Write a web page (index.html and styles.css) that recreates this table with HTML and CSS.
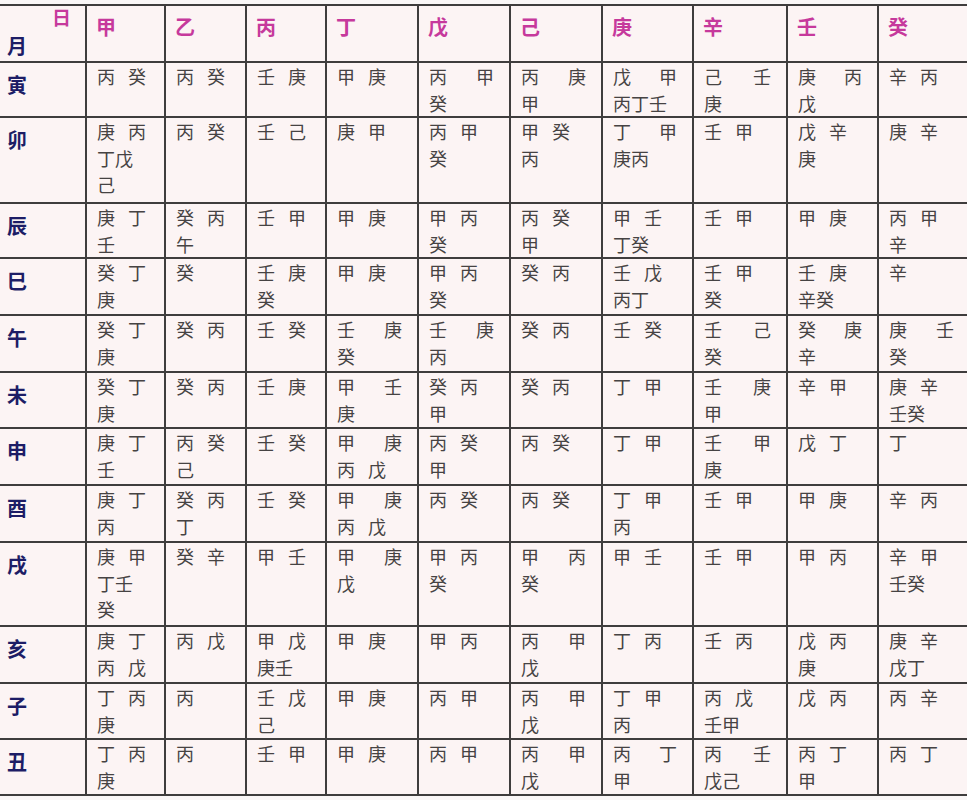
FILE: index.html
```html
<!DOCTYPE html>
<html lang="zh-CN">
<head>
<meta charset="utf-8">
<title>月日干支表</title>
<link rel="stylesheet" href="styles.css">
</head>
<body>
<div class="grid">
  <div class="corner"><span class="ri">日</span><span class="yue">月</span></div>
  <div class="h">甲</div><div class="h">乙</div><div class="h">丙</div><div class="h">丁</div><div class="h">戊</div><div class="h">己</div><div class="h">庚</div><div class="h">辛</div><div class="h">壬</div><div class="h">癸</div>

  <div class="r">寅</div>
  <div class="d"><div class="ln"><span>丙</span><span>癸</span></div></div>
  <div class="d"><div class="ln"><span>丙</span><span>癸</span></div></div>
  <div class="d"><div class="ln"><span>壬</span><span>庚</span></div></div>
  <div class="d"><div class="ln"><span>甲</span><span>庚</span></div></div>
  <div class="d"><div class="ln j"><span>丙</span><span>甲</span></div><div class="ln"><span>癸</span></div></div>
  <div class="d"><div class="ln j"><span>丙</span><span>庚</span></div><div class="ln"><span>甲</span></div></div>
  <div class="d"><div class="ln j"><span>戊</span><span>甲</span></div><div class="ln"><span>丙丁壬</span></div></div>
  <div class="d"><div class="ln j"><span>己</span><span>壬</span></div><div class="ln"><span>庚</span></div></div>
  <div class="d"><div class="ln j"><span>庚</span><span>丙</span></div><div class="ln"><span>戊</span></div></div>
  <div class="d"><div class="ln"><span>辛</span><span>丙</span></div></div>

  <div class="r">卯</div>
  <div class="d"><div class="ln"><span>庚</span><span>丙</span></div><div class="ln"><span>丁戊</span></div><div class="ln"><span>己</span></div></div>
  <div class="d"><div class="ln"><span>丙</span><span>癸</span></div></div>
  <div class="d"><div class="ln"><span>壬</span><span>己</span></div></div>
  <div class="d"><div class="ln"><span>庚</span><span>甲</span></div></div>
  <div class="d"><div class="ln"><span>丙</span><span>甲</span></div><div class="ln"><span>癸</span></div></div>
  <div class="d"><div class="ln"><span>甲</span><span>癸</span></div><div class="ln"><span>丙</span></div></div>
  <div class="d"><div class="ln j"><span>丁</span><span>甲</span></div><div class="ln"><span>庚丙</span></div></div>
  <div class="d"><div class="ln"><span>壬</span><span>甲</span></div></div>
  <div class="d"><div class="ln"><span>戊</span><span>辛</span></div><div class="ln"><span>庚</span></div></div>
  <div class="d"><div class="ln"><span>庚</span><span>辛</span></div></div>

  <div class="r">辰</div>
  <div class="d"><div class="ln"><span>庚</span><span>丁</span></div><div class="ln"><span>壬</span></div></div>
  <div class="d"><div class="ln"><span>癸</span><span>丙</span></div><div class="ln"><span>午</span></div></div>
  <div class="d"><div class="ln"><span>壬</span><span>甲</span></div></div>
  <div class="d"><div class="ln"><span>甲</span><span>庚</span></div></div>
  <div class="d"><div class="ln"><span>甲</span><span>丙</span></div><div class="ln"><span>癸</span></div></div>
  <div class="d"><div class="ln"><span>丙</span><span>癸</span></div><div class="ln"><span>甲</span></div></div>
  <div class="d"><div class="ln"><span>甲</span><span>壬</span></div><div class="ln"><span>丁癸</span></div></div>
  <div class="d"><div class="ln"><span>壬</span><span>甲</span></div></div>
  <div class="d"><div class="ln"><span>甲</span><span>庚</span></div></div>
  <div class="d"><div class="ln"><span>丙</span><span>甲</span></div><div class="ln"><span>辛</span></div></div>

  <div class="r">巳</div>
  <div class="d"><div class="ln"><span>癸</span><span>丁</span></div><div class="ln"><span>庚</span></div></div>
  <div class="d"><div class="ln"><span>癸</span></div></div>
  <div class="d"><div class="ln"><span>壬</span><span>庚</span></div><div class="ln"><span>癸</span></div></div>
  <div class="d"><div class="ln"><span>甲</span><span>庚</span></div></div>
  <div class="d"><div class="ln"><span>甲</span><span>丙</span></div><div class="ln"><span>癸</span></div></div>
  <div class="d"><div class="ln"><span>癸</span><span>丙</span></div></div>
  <div class="d"><div class="ln"><span>壬</span><span>戊</span></div><div class="ln"><span>丙丁</span></div></div>
  <div class="d"><div class="ln"><span>壬</span><span>甲</span></div><div class="ln"><span>癸</span></div></div>
  <div class="d"><div class="ln"><span>壬</span><span>庚</span></div><div class="ln"><span>辛癸</span></div></div>
  <div class="d"><div class="ln"><span>辛</span></div></div>

  <div class="r">午</div>
  <div class="d"><div class="ln"><span>癸</span><span>丁</span></div><div class="ln"><span>庚</span></div></div>
  <div class="d"><div class="ln"><span>癸</span><span>丙</span></div></div>
  <div class="d"><div class="ln"><span>壬</span><span>癸</span></div></div>
  <div class="d"><div class="ln j"><span>壬</span><span>庚</span></div><div class="ln"><span>癸</span></div></div>
  <div class="d"><div class="ln j"><span>壬</span><span>庚</span></div><div class="ln"><span>丙</span></div></div>
  <div class="d"><div class="ln"><span>癸</span><span>丙</span></div></div>
  <div class="d"><div class="ln"><span>壬</span><span>癸</span></div></div>
  <div class="d"><div class="ln j"><span>壬</span><span>己</span></div><div class="ln"><span>癸</span></div></div>
  <div class="d"><div class="ln j"><span>癸</span><span>庚</span></div><div class="ln"><span>辛</span></div></div>
  <div class="d"><div class="ln j"><span>庚</span><span>壬</span></div><div class="ln"><span>癸</span></div></div>

  <div class="r">未</div>
  <div class="d"><div class="ln"><span>癸</span><span>丁</span></div><div class="ln"><span>庚</span></div></div>
  <div class="d"><div class="ln"><span>癸</span><span>丙</span></div></div>
  <div class="d"><div class="ln"><span>壬</span><span>庚</span></div></div>
  <div class="d"><div class="ln j"><span>甲</span><span>壬</span></div><div class="ln"><span>庚</span></div></div>
  <div class="d"><div class="ln"><span>癸</span><span>丙</span></div><div class="ln"><span>甲</span></div></div>
  <div class="d"><div class="ln"><span>癸</span><span>丙</span></div></div>
  <div class="d"><div class="ln"><span>丁</span><span>甲</span></div></div>
  <div class="d"><div class="ln j"><span>壬</span><span>庚</span></div><div class="ln"><span>甲</span></div></div>
  <div class="d"><div class="ln"><span>辛</span><span>甲</span></div></div>
  <div class="d"><div class="ln"><span>庚</span><span>辛</span></div><div class="ln"><span>壬癸</span></div></div>

  <div class="r">申</div>
  <div class="d"><div class="ln"><span>庚</span><span>丁</span></div><div class="ln"><span>壬</span></div></div>
  <div class="d"><div class="ln"><span>丙</span><span>癸</span></div><div class="ln"><span>己</span></div></div>
  <div class="d"><div class="ln"><span>壬</span><span>癸</span></div></div>
  <div class="d"><div class="ln j"><span>甲</span><span>庚</span></div><div class="ln"><span>丙</span><span>戊</span></div></div>
  <div class="d"><div class="ln"><span>丙</span><span>癸</span></div><div class="ln"><span>甲</span></div></div>
  <div class="d"><div class="ln"><span>丙</span><span>癸</span></div></div>
  <div class="d"><div class="ln"><span>丁</span><span>甲</span></div></div>
  <div class="d"><div class="ln j"><span>壬</span><span>甲</span></div><div class="ln"><span>庚</span></div></div>
  <div class="d"><div class="ln"><span>戊</span><span>丁</span></div></div>
  <div class="d"><div class="ln"><span>丁</span></div></div>

  <div class="r">酉</div>
  <div class="d"><div class="ln"><span>庚</span><span>丁</span></div><div class="ln"><span>丙</span></div></div>
  <div class="d"><div class="ln"><span>癸</span><span>丙</span></div><div class="ln"><span>丁</span></div></div>
  <div class="d"><div class="ln"><span>壬</span><span>癸</span></div></div>
  <div class="d"><div class="ln j"><span>甲</span><span>庚</span></div><div class="ln"><span>丙</span><span>戊</span></div></div>
  <div class="d"><div class="ln"><span>丙</span><span>癸</span></div></div>
  <div class="d"><div class="ln"><span>丙</span><span>癸</span></div></div>
  <div class="d"><div class="ln"><span>丁</span><span>甲</span></div><div class="ln"><span>丙</span></div></div>
  <div class="d"><div class="ln"><span>壬</span><span>甲</span></div></div>
  <div class="d"><div class="ln"><span>甲</span><span>庚</span></div></div>
  <div class="d"><div class="ln"><span>辛</span><span>丙</span></div></div>

  <div class="r">戌</div>
  <div class="d"><div class="ln"><span>庚</span><span>甲</span></div><div class="ln"><span>丁壬</span></div><div class="ln"><span>癸</span></div></div>
  <div class="d"><div class="ln"><span>癸</span><span>辛</span></div></div>
  <div class="d"><div class="ln"><span>甲</span><span>壬</span></div></div>
  <div class="d"><div class="ln j"><span>甲</span><span>庚</span></div><div class="ln"><span>戊</span></div></div>
  <div class="d"><div class="ln"><span>甲</span><span>丙</span></div><div class="ln"><span>癸</span></div></div>
  <div class="d"><div class="ln j"><span>甲</span><span>丙</span></div><div class="ln"><span>癸</span></div></div>
  <div class="d"><div class="ln"><span>甲</span><span>壬</span></div></div>
  <div class="d"><div class="ln"><span>壬</span><span>甲</span></div></div>
  <div class="d"><div class="ln"><span>甲</span><span>丙</span></div></div>
  <div class="d"><div class="ln"><span>辛</span><span>甲</span></div><div class="ln"><span>壬癸</span></div></div>

  <div class="r">亥</div>
  <div class="d"><div class="ln"><span>庚</span><span>丁</span></div><div class="ln"><span>丙</span><span>戊</span></div></div>
  <div class="d"><div class="ln"><span>丙</span><span>戊</span></div></div>
  <div class="d"><div class="ln"><span>甲</span><span>戊</span></div><div class="ln"><span>庚壬</span></div></div>
  <div class="d"><div class="ln"><span>甲</span><span>庚</span></div></div>
  <div class="d"><div class="ln"><span>甲</span><span>丙</span></div></div>
  <div class="d"><div class="ln j"><span>丙</span><span>甲</span></div><div class="ln"><span>戊</span></div></div>
  <div class="d"><div class="ln"><span>丁</span><span>丙</span></div></div>
  <div class="d"><div class="ln"><span>壬</span><span>丙</span></div></div>
  <div class="d"><div class="ln"><span>戊</span><span>丙</span></div><div class="ln"><span>庚</span></div></div>
  <div class="d"><div class="ln"><span>庚</span><span>辛</span></div><div class="ln"><span>戊丁</span></div></div>

  <div class="r">子</div>
  <div class="d"><div class="ln"><span>丁</span><span>丙</span></div><div class="ln"><span>庚</span></div></div>
  <div class="d"><div class="ln"><span>丙</span></div></div>
  <div class="d"><div class="ln"><span>壬</span><span>戊</span></div><div class="ln"><span>己</span></div></div>
  <div class="d"><div class="ln"><span>甲</span><span>庚</span></div></div>
  <div class="d"><div class="ln"><span>丙</span><span>甲</span></div></div>
  <div class="d"><div class="ln j"><span>丙</span><span>甲</span></div><div class="ln"><span>戊</span></div></div>
  <div class="d"><div class="ln"><span>丁</span><span>甲</span></div><div class="ln"><span>丙</span></div></div>
  <div class="d"><div class="ln"><span>丙</span><span>戊</span></div><div class="ln"><span>壬甲</span></div></div>
  <div class="d"><div class="ln"><span>戊</span><span>丙</span></div></div>
  <div class="d"><div class="ln"><span>丙</span><span>辛</span></div></div>

  <div class="r">丑</div>
  <div class="d"><div class="ln"><span>丁</span><span>丙</span></div><div class="ln"><span>庚</span></div></div>
  <div class="d"><div class="ln"><span>丙</span></div></div>
  <div class="d"><div class="ln"><span>壬</span><span>甲</span></div></div>
  <div class="d"><div class="ln"><span>甲</span><span>庚</span></div></div>
  <div class="d"><div class="ln"><span>丙</span><span>甲</span></div></div>
  <div class="d"><div class="ln j"><span>丙</span><span>甲</span></div><div class="ln"><span>戊</span></div></div>
  <div class="d"><div class="ln j"><span>丙</span><span>丁</span></div><div class="ln"><span>甲</span></div></div>
  <div class="d"><div class="ln j"><span>丙</span><span>壬</span></div><div class="ln"><span>戊己</span></div></div>
  <div class="d"><div class="ln"><span>丙</span><span>丁</span></div><div class="ln"><span>甲</span></div></div>
  <div class="d"><div class="ln"><span>丙</span><span>丁</span></div></div>
</div>
</body>
</html>
```
FILE: styles.css
```css
html, body {
  margin: 0;
  padding: 0;
}
body {
  background: #faf7f7;
  overflow: hidden;
  width: 967px;
  height: 800px;
  font-family: "Noto Sans CJK SC", "Noto Sans CJK JP", sans-serif;
}
.grid {
  display: grid;
  grid-template-columns: 85px 77px 79px 78px 90px 90px 90px 89px 92px 89px 90px;
  grid-template-rows: 55px 53px 84px 53px 55px 55px 54px 55px 55px 82px 55px 54px 54px;
  gap: 2px;
  padding: 2px 0;
  margin-top: 4px;
  background: #3f3d3d;
  width: max-content;
}
.grid > div {
  background: #fcf4f4;
  min-width: 0;
}
.corner {
  display: flex;
  flex-direction: column;
  font-weight: 700;
}
.corner .ri {
  align-self: flex-end;
  margin-right: 14px;
  font-size: 19px;
  line-height: 28px;
  margin-top: -3px;
  color: #c6399c;
}
.corner .yue {
  margin-top: auto;
  margin-left: 7px;
  margin-bottom: 2px;
  font-size: 20px;
  line-height: 29px;
  color: #1d1d66;
}
.h {
  padding: 6px 0 0 9px;
  font-size: 20px;
  line-height: 30px;
  font-weight: 700;
  color: #c6399c;
}
.r {
  padding: 7px 0 0 7px;
  font-size: 20px;
  line-height: 30px;
  font-weight: 700;
  color: #1d1d66;
}
.d {
  padding: 0 15px 0 10px;
  font-size: 18px;
  line-height: 26.5px;
  color: #464343;
}
.ln {
  display: flex;
  gap: 13px;
}
.ln.j {
  justify-content: space-between;
}
```
